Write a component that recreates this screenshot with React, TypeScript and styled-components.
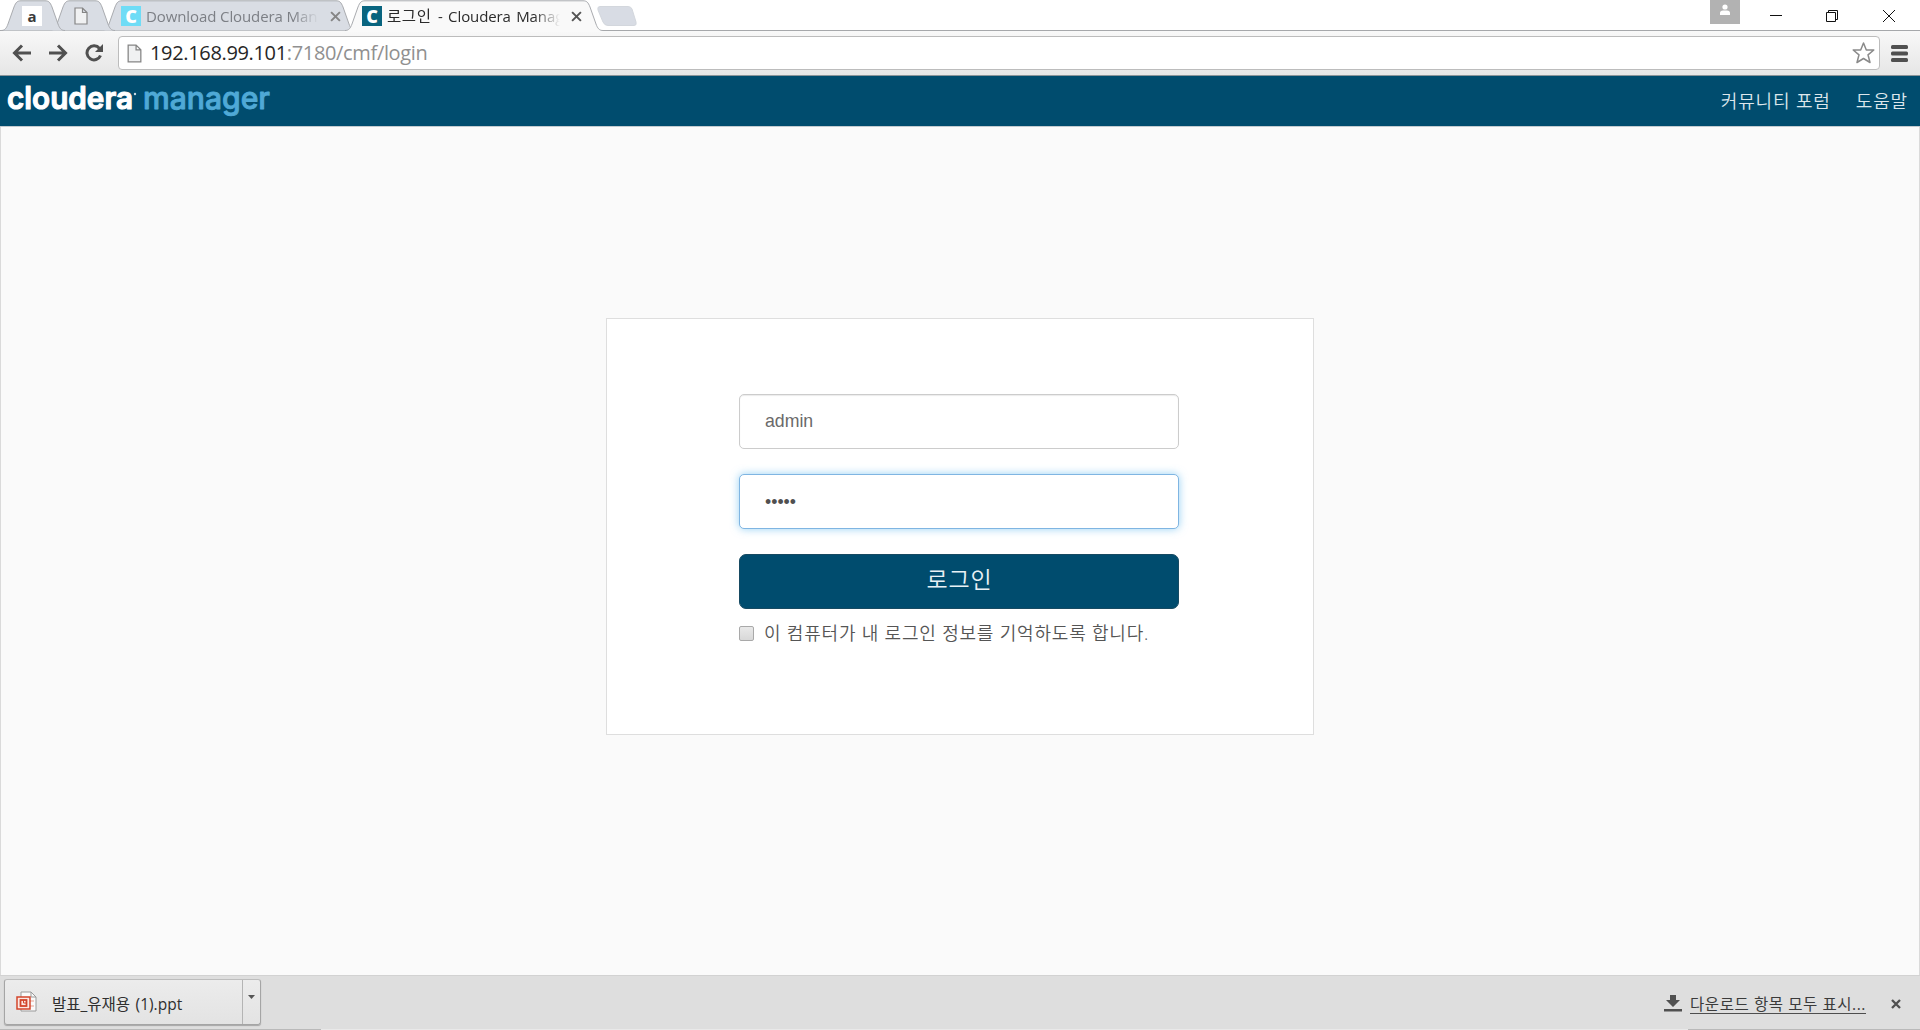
import React from "react";
import styled, { createGlobalStyle, css } from "styled-components";

const ui = `"Open Sans", "Noto Sans CJK KR", sans-serif`;

const GlobalStyle = createGlobalStyle`
  * { box-sizing: border-box; }
  body { margin: 0; background: #fafafa; overflow: hidden; }
  svg { display: block; flex: none; }
`;

const Window = styled.div`
  display: flex;
  flex-direction: column;
  width: 1920px;
  height: 1030px;
  font-family: ${ui};
  color: #333;
`;

/* ---------- tab strip ---------- */
const TabStrip = styled.div`
  display: flex;
  height: 31px;
  padding-left: 1px;
  background: #fff;
  border-bottom: 1px solid #a6a8ab;
`;

const TabBox = styled.div<{ $width: number; $overlap: number; $z: number; $pad: number }>`
  position: relative;
  z-index: ${(p) => p.$z};
  display: flex;
  align-items: center;
  flex: none;
  width: ${(p) => p.$width}px;
  height: 31px;
  margin-left: ${(p) => -p.$overlap}px;
  padding: 1px 0 0 ${(p) => p.$pad}px;
`;

const TabShape = styled.svg`
  position: absolute;
  left: 0;
  top: 0;
  z-index: -1;
`;

const TabTitle = styled.span<{ $active?: boolean }>`
  width: 173px;
  margin: -1px 11px 0 5px;
  white-space: nowrap;
  font-size: 15px;
  line-height: 22px;
  letter-spacing: -0.1px;
  word-spacing: ${(p) => (p.$active ? 1.6 : 0)}px;
  color: ${(p) => (p.$active ? "#2b2b2b" : "#7c7f85")};
  mask-image: linear-gradient(90deg, #000 calc(100% - 26px), transparent);
`;

const TabTitleKorean = styled.span`
  margin-right: 1px;
  font-size: 15.5px;
  letter-spacing: 0.6px;
`;

const Favicon = styled.span<{ $bg: string; $color: string; $size: number; $weight?: number }>`
  display: flex;
  align-items: center;
  justify-content: center;
  flex: none;
  width: 20px;
  height: 20px;
  padding-bottom: 1px;
  background: ${(p) => p.$bg};
  color: ${(p) => p.$color};
  font: ${(p) => p.$weight ?? 800} ${(p) => p.$size}px/18px ${ui};
`;

const WindowControls = styled.div`
  display: flex;
  align-items: flex-start;
  margin-left: auto;
`;

const Avatar = styled.div`
  display: flex;
  justify-content: center;
  width: 30px;
  height: 24px;
  padding-top: 4px;
  margin-right: 30px;
  background: #b2b2b2;
`;

/* ---------- toolbar ---------- */
const Toolbar = styled.div`
  display: flex;
  align-items: center;
  height: 45px;
  padding: 0 12px 0 12px;
  background: linear-gradient(#f8f8f8, #e6e6e6);
  border-bottom: 1px solid #8b9499;
`;

const NavIcons = styled.div`
  display: flex;
  gap: 16px;
  margin-right: 14px;
`;

const AddressBar = styled.div`
  display: flex;
  align-items: center;
  flex: 1;
  height: 34px;
  padding: 0 4px 0 8px;
  margin-right: 11px;
  background: #fff;
  border: 1px solid #bcbcbc;
  border-radius: 4px;
`;

const Url = styled.span`
  flex: 1;
  margin-left: 8px;
  font-size: 20px;
  line-height: 28px;
  letter-spacing: -0.34px;
  color: #909090;
  b { font-weight: 400; color: #262626; }
`;

/* ---------- page ---------- */
const Header = styled.header`
  display: flex;
  justify-content: space-between;
  height: 51px;
  padding: 0 12px 0 0;
  background: #004c6e;
  border-bottom: 1px solid #c3cbd0;
`;

const HeaderLinks = styled.nav`
  display: flex;
  align-items: center;
  gap: 25px;
`;

const HeaderLink = styled.a`
  font-size: 18px;
  line-height: 26px;
  font-weight: 350;
  letter-spacing: 0.85px;
  color: #dde7ec;
`;

const Main = styled.main`
  display: flex;
  flex: 1;
  justify-content: center;
  align-items: flex-start;
  padding-top: 191px;
  background: #fafafa;
  border: solid #dadada;
  border-width: 0 1px;
`;

const Card = styled.form`
  display: flex;
  flex-direction: column;
  width: 708px;
  height: 417px;
  padding: 75px 134px 0 132px;
  background: #fff;
  border: 1px solid #dedede;
`;

const Field = styled.input<{ $focused?: boolean }>`
  width: 440px;
  height: 55px;
  margin-bottom: 25px;
  padding: 0 25px;
  font: 17.7px "Liberation Sans", sans-serif;
  color: #6a6a6a;
  background: #fff;
  border: 1px solid #ccc;
  border-radius: 5px;
  box-shadow: inset 0 1px 1px rgba(0, 0, 0, 0.08);
  outline: none;
  ${(p) =>
    p.$focused &&
    css`
      padding-top: 2px;
      color: #505050;
      border-color: #7fb5e2;
      box-shadow: 0 0 9px rgba(82, 178, 236, 0.6);
    `}
`;

const LoginButton = styled.button`
  width: 440px;
  height: 55px;
  padding: 0 0 5px 1px;
  font: 350 23px/32px ${ui};
  letter-spacing: 0.8px;
  color: #e9f1f5;
  background: #004c6e;
  border: 1px solid #174a62;
  border-radius: 7px;
`;

const Remember = styled.label`
  display: flex;
  align-items: center;
  height: 26px;
  margin-top: 11px;
  font-size: 18px;
  line-height: 26px;
  font-weight: 350;
  letter-spacing: 0.8px;
  white-space: nowrap;
  color: #555;
`;

const Checkbox = styled.span`
  width: 15px;
  height: 15px;
  margin: 1px 10px 0 0;
  background: linear-gradient(#e9e9e9, #d8d8d8);
  border: 1px solid #a9a9a9;
  border-radius: 2px;
`;

/* ---------- download shelf ---------- */
const Shelf = styled.footer`
  display: flex;
  align-items: flex-start;
  justify-content: space-between;
  height: 55px;
  padding: 3px 19px 0 4px;
  border-top: 1px solid #d2d2d2;
  background:
    linear-gradient(90deg, #b9b9b9 321px, #e9e9e9 321px 1688px, #b9b9b9 1688px) bottom / 100% 1px no-repeat,
    #dedede;
`;

const DownloadItem = styled.div`
  display: flex;
  align-items: stretch;
  width: 257px;
  height: 46px;
  background: linear-gradient(#ececec, #e3e3e3);
  border: 1px solid #a5a5a5;
  border-top-color: #bdbdbd;
  border-radius: 3px;
  box-shadow: 0 1px 1px rgba(0, 0, 0, 0.25);
`;

const DownloadFile = styled.div`
  display: flex;
  align-items: center;
  flex: 1;
  padding: 0 0 2px 11px;
  font-size: 15.5px;
  letter-spacing: 0;
  word-spacing: 1.5px;
  white-space: nowrap;
  color: #2f2f2f;
  border-right: 1px solid #b4b4b4;
`;

const FileName = styled.span`
  margin: 4px 0 0 15px;
`;

const DownloadMenu = styled.div`
  width: 17px;
  padding: 15px 0 0 5px;
`;

const ShelfActions = styled.div`
  display: flex;
  align-items: center;
  height: 49px;
`;

const ShowAll = styled.a`
  margin: 1px 25px 0 8px;
  font-size: 15.5px;
  line-height: 21px;
  height: 20px;
  color: #3b3b3b;
  letter-spacing: 0.57px;
  border-bottom: 1px solid #4e4e4e;
`;

/* ---------- drawings ---------- */
const Cross = ({ size, color, width = 2 }: { size: number; color: string; width?: number }) => (
  <svg width={size} height={size} viewBox="0 0 10 10" stroke={color} strokeWidth={width}>
    <path d="M1 1 9 9M9 1 1 9" />
  </svg>
);

const PageIcon = ({ w = 14, h = 18 }: { w?: number; h?: number }) => (
  <svg width={w} height={h} viewBox="0 0 14 18" fill="#f0f1f2" stroke="#858585" strokeWidth="1.2">
    <path d="M1 1H8.5L13 5.5V17H1ZM8.5 1V5.5H13" />
  </svg>
);

type TabProps = {
  width: number;
  overlap?: number;
  z: number;
  pad: number;
  active?: boolean;
  children: React.ReactNode;
};

const Tab = ({ width: w, overlap = 0, z, pad, active, children }: TabProps) => {
  const outline = `M0 30.5C4 30.5 5.5 28 7 24L13 7C15 2 16.5 .8 20 .8H${w - 20}C${w - 16.5} .8 ${w - 15} 2 ${w - 13} 7L${w - 7} 24C${w - 5.5} 28 ${w - 4} 30.5 ${w} 30.5`;
  return (
    <TabBox $width={w} $overlap={overlap} $z={z} $pad={pad}>
      <TabShape width={w} height="32" viewBox={`0 0 ${w} 32`}>
        {active && <path d={`${outline}V32H0Z`} fill="#f9f9f9" />}
        <path d={outline} fill={active ? "none" : "#d9dde4"} stroke="#a9abaf" />
      </TabShape>
      {children}
    </TabBox>
  );
};

const Logo = () => (
  <svg
    width="280"
    height="50"
    viewBox="0 0 280 50"
    fontFamily="Inter, sans-serif"
    fontSize="31"
    strokeLinejoin="round"
  >
    <text x="7" y="33" fontWeight="600" fill="#fff" stroke="#fff" strokeWidth="1.1" textLength="126" lengthAdjust="spacingAndGlyphs">
      cloudera
    </text>
    <circle cx="135" cy="18" r="1.2" fill="#c9dbe4" />
    <text x="143" y="33" fontWeight="500" fill="#4fa9d6" stroke="#4fa9d6" strokeWidth="0.9" textLength="127" lengthAdjust="spacingAndGlyphs">
      manager
    </text>
  </svg>
);

const NewTab = styled.svg`
  margin: 6px 0 0 -7px;
`;

export default function App() {
  return (
    <Window>
      <GlobalStyle />
      <TabStrip>
        <Tab width={64} z={4} pad={21}>
          <Favicon $bg="#fff" $color="#3b3b3b" $size={15} $weight={700}>a</Favicon>
        </Tab>
        <Tab width={65} overlap={15} z={3} pad={24}>
          <PageIcon />
        </Tab>
        <Tab width={254} overlap={13} z={2} pad={19}>
          <Favicon $bg="#6fdcf6" $color="#fff" $size={18}>C</Favicon>
          <TabTitle>Download Cloudera Man</TabTitle>
          <Cross size={11} color="#858585" width={1.8} />
        </Tab>
        <Tab width={258} overlap={11} z={5} pad={17} active>
          <Favicon $bg="#08647f" $color="#fff" $size={18}>C</Favicon>
          <TabTitle $active>
            <TabTitleKorean>로그인</TabTitleKorean> - Cloudera Manag
          </TabTitle>
          <Cross size={11} color="#555" width={1.8} />
        </Tab>
        <NewTab width="42" height="22" viewBox="0 0 42 22">
          <path d="M4 .5H32Q35 .5 36 3L40 16Q41 19.5 38 19.5H12Q8.500 19.500 7 16L2 4Q1 .5 4 .5Z" fill="#d8dce4" stroke="#d3d7dd" />
        </NewTab>
        <WindowControls>
          <Avatar>
            <svg width="12" height="12" viewBox="0 0 12 12" fill="#fff">
              <circle cx="6" cy="3" r="2.6" />
              <path d="M1 11V9Q1 6.500 4 6.500H8Q11 6.500 11 9V11Z" />
            </svg>
          </Avatar>
          <svg width="150" height="30" viewBox="0 0 150 30" fill="none" stroke="#111" strokeWidth="1">
            <path d="M0 15.5H12M56.500 12.500H65.500V21.500H56.500ZM58.500 12V10.500H67.500V19.500H66" />
            <path d="M113 10 125 22M125 10 113 22" />
          </svg>
        </WindowControls>
      </TabStrip>

      <Toolbar>
        <NavIcons>
          <svg width="20" height="18" viewBox="0 0 20 18" fill="none" stroke="#505050" strokeWidth="3">
            <path d="M19 9H3M10 1.500 2.500 9 10 16.500" />
          </svg>
          <svg width="20" height="18" viewBox="0 0 20 18" fill="none" stroke="#505050" strokeWidth="3">
            <path d="M1 9H17M10 1.500 17.500 9 10 16.500" />
          </svg>
          <svg width="20" height="18" viewBox="0 0 20 18" fill="none" stroke="#505050" strokeWidth="3">
            <path d="M15.500 4.500A7 7 0 1 0 16.500 11.500" />
            <path d="M19 0V8H11Z" fill="#505050" stroke="none" />
          </svg>
        </NavIcons>
        <AddressBar>
          <PageIcon w={15} h={19} />
          <Url>
            <b>192.168.99.101</b>:7180/cmf/login
          </Url>
          <svg width="23" height="22" viewBox="0 0 23 22" fill="#fff" stroke="#8a8a8a" strokeWidth="1.500" strokeLinejoin="round">
            <path d="M11.500 1 14.300 8H21.800L16 12.800 18 20.500 11.500 16.500 5 20.500 7 12.800 1.200 8H8.700Z" />
          </svg>
        </AddressBar>
        <svg width="17" height="17" viewBox="0 0 17 17" fill="#505050">
          <rect width="17" height="4" rx="1.500" />
          <rect y="6.500" width="17" height="4" rx="1.500" />
          <rect y="13" width="17" height="4" rx="1.500" />
        </svg>
      </Toolbar>

      <Header>
        <Logo />
        <HeaderLinks>
          <HeaderLink>커뮤니티 포럼</HeaderLink>
          <HeaderLink>도움말</HeaderLink>
        </HeaderLinks>
      </Header>

      <Main>
        <Card>
          <Field defaultValue="admin" />
          <Field $focused type="password" defaultValue="admin" />
          <LoginButton type="button">로그인</LoginButton>
          <Remember>
            <Checkbox />이 컴퓨터가 내 로그인 정보를 기억하도록 합니다.
          </Remember>
        </Card>
      </Main>

      <Shelf>
        <DownloadItem>
          <DownloadFile>
            <svg width="21" height="21" viewBox="0 0 21 21" fill="none">
              <path d="M5 1H15L20 6V20H5Z" fill="#fafafa" stroke="#9a9a9a" />
              <path d="M15 1V6H20" stroke="#9a9a9a" />
              <path d="M14 10H18M14 15H18" stroke="#e9a08f" />
              <rect x="1" y="6" width="13" height="12" fill="#fbe9e5" stroke="#d3452b" strokeWidth="1.500" />
              <rect x="4.500" y="9" width="6" height="6" stroke="#d3452b" strokeWidth="1.800" />
              <path d="M7.500 9V12H10" stroke="#d3452b" />
            </svg>
            <FileName>발표_유재용 (1).ppt</FileName>
          </DownloadFile>
          <DownloadMenu>
            <svg width="7" height="4" viewBox="0 0 7 4" fill="#555">
              <path d="M0 0H7L3.500 4Z" />
            </svg>
          </DownloadMenu>
        </DownloadItem>
        <ShelfActions>
          <svg width="18" height="17" viewBox="0 0 18 17" fill="#505050">
            <path d="M6 0H12V5H16L9 12 2 5H6ZM0 14H18V16.500H0Z" />
          </svg>
          <ShowAll>다운로드 항목 모두 표시...</ShowAll>
          <Cross size={10} color="#505050" width={2.3} />
        </ShelfActions>
      </Shelf>
    </Window>
  );
}
